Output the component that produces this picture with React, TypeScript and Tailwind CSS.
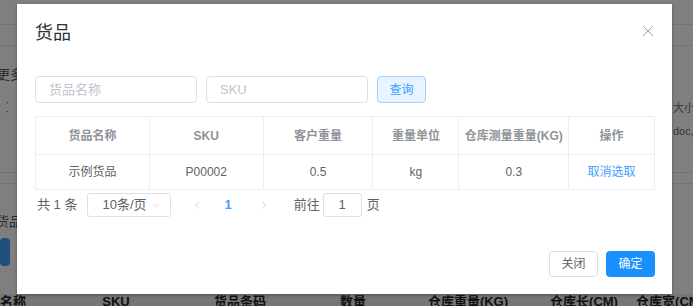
import { ChevronDown, ChevronLeft, ChevronRight, X } from "lucide-react"

const font = "font-['Liberation_Sans','Noto_Sans_CJK_SC',sans-serif]"

const cols = [
  { title: "货品名称", w: "w-[114px]", value: "示例货品" },
  { title: "SKU", w: "w-[114px]", value: "P00002" },
  { title: "客户重量", w: "w-[110px]", value: "0.5" },
  { title: "重量单位", w: "w-[86px]", value: "kg" },
  { title: "仓库测量重量(KG)", w: "w-[110px]", value: "0.3" },
  { title: "操作", w: "w-[86px]", value: "取消选取" },
]

const bottomCols = [
  { t: "名称", w: "w-[60px]" },
  { t: "SKU", w: "w-[112px]" },
  { t: "货品条码", w: "w-[136px]" },
  { t: "数量", w: "w-[90px]" },
  { t: "仓库重量(KG)", w: "w-[140px]" },
  { t: "仓库长(CM)", w: "w-[92px]" },
  { t: "仓库宽(CM)", w: "w-[80px]" },
]

export default function App() {
  return (
    <div className={`relative w-[693px] h-[306px] overflow-hidden bg-white ${font}`}>
      {/* page underneath */}
      <div className="flex flex-col h-full">
        <div className="h-[25px] border-b border-gray-200" />
        <div className="h-[21px] border-b border-gray-200" />
        <div className="flex justify-between h-[126px] text-[13px] text-gray-600">
          <div className="pt-[19px] -ml-[3px]">
            <div>更多</div>
            <div className="mt-[12px] pl-[8px] leading-[9px] text-gray-500">·<br />·</div>
          </div>
          <div className="pt-[54px] text-[11px] text-gray-500 -mr-[10px] w-[30px]">
            <div>大小</div>
            <div className="mt-[6px]">doc,.d</div>
          </div>
        </div>
        <div className="h-[12px] border-y border-gray-200" />
        <div className="pt-[28px] text-[13px] text-gray-600 -ml-[4px]">货品</div>
        <div className="mt-[6px] w-[10px] h-[28px] rounded bg-[#409eff]" />
        <div className="mt-auto flex h-[12px] bg-[#ececec] text-[13px] font-bold text-[#222] leading-[15px]">
          {bottomCols.map((c) => (
            <div key={c.t} className={`${c.w} shrink-0 text-center first:text-left`}>
              {c.t}
            </div>
          ))}
        </div>
      </div>

      {/* overlay */}
      <div className="absolute inset-0 bg-black/50" />

      {/* dialog */}
      <div className="absolute left-[17px] top-[4px] w-[655px] h-[290px] bg-white shadow-[0_1px_3px_rgba(0,0,0,0.3)] flex flex-col">
        <div className="flex items-center justify-between pl-[18px] pr-[15px] pt-[18px] h-[40px]">
          <span className="text-[18px] leading-[24px] text-[#303133]">货品</span>
          <X className="w-[18px] h-[18px] text-[#909399] -mt-[5px]" strokeWidth={1.2} />
        </div>

        <div className="px-[18px] pt-[32px] flex flex-col">
          <div className="flex items-center">
            <div className="w-[162px] h-[27px] border border-[#dcdfe6] rounded-[4px] flex items-center pl-[13px] text-[13px] text-[#c0c4cc]">
              货品名称
            </div>
            <div className="ml-[9px] w-[162px] h-[27px] border border-[#dcdfe6] rounded-[4px] flex items-center pl-[13px] text-[13px] text-[#c0c4cc]">
              SKU
            </div>
            <div className="ml-[9px] w-[49px] h-[27px] border border-[#a3d0fd] bg-[#e8f4ff] rounded-[4px] flex items-center justify-center text-[12px] text-[#409eff]">
              查询
            </div>
          </div>

          <div className="mt-[13px] w-[620px] border-t border-l border-[#ebeef5] text-[12px]">
            <div className="flex h-[38px] font-bold text-[#909399]">
              {cols.map((c) => (
                <div key={c.title} className={`${c.w} flex items-center justify-center border-r border-b border-[#ebeef5]`}>
                  {c.title}
                </div>
              ))}
            </div>
            <div className="flex h-[35px] text-[#606266]">
              {cols.map((c, i) => (
                <div
                  key={c.title}
                  className={`${c.w} flex items-center justify-center border-r border-b border-[#ebeef5] ${i === 5 ? "text-[#409eff]" : ""}`}
                >
                  {c.value}
                </div>
              ))}
            </div>
          </div>

          <div className="mt-[3px] flex items-center h-[24px] text-[13px] text-[#606266]">
            <span className="ml-[2px]">共 1 条</span>
            <div className="ml-[10px] w-[84px] h-[24px] border border-[#dcdfe6] rounded-[3px] flex items-center justify-between pl-[14px] pr-[8px]">
              <span>10条/页</span>
              <ChevronDown className="w-[11px] h-[11px] text-[#c0c4cc]" strokeWidth={1.5} />
            </div>
            <ChevronLeft className="ml-[20px] w-[12px] h-[12px] text-[#c0c4cc]" strokeWidth={1.5} />
            <span className="ml-[21px] font-bold text-[#409eff]">1</span>
            <ChevronRight className="ml-[26px] w-[12px] h-[12px] text-[#c0c4cc]" strokeWidth={1.5} />
            <span className="ml-[24px]">前往</span>
            <div className="ml-[3px] w-[39px] h-[24px] border border-[#dcdfe6] rounded-[3px] flex items-center justify-center">
              1
            </div>
            <span className="ml-[5px]">页</span>
          </div>
        </div>

        <div className="mt-auto mb-[17px] pr-[17px] flex justify-end gap-[8px] text-[12px]">
          <div className="w-[49px] h-[26px] border border-[#dcdfe6] rounded-[4px] flex items-center justify-center text-[#606266]">
            关闭
          </div>
          <div className="w-[49px] h-[26px] rounded-[4px] bg-[#1890ff] flex items-center justify-center text-white">
            确定
          </div>
        </div>
      </div>
    </div>
  )
}
